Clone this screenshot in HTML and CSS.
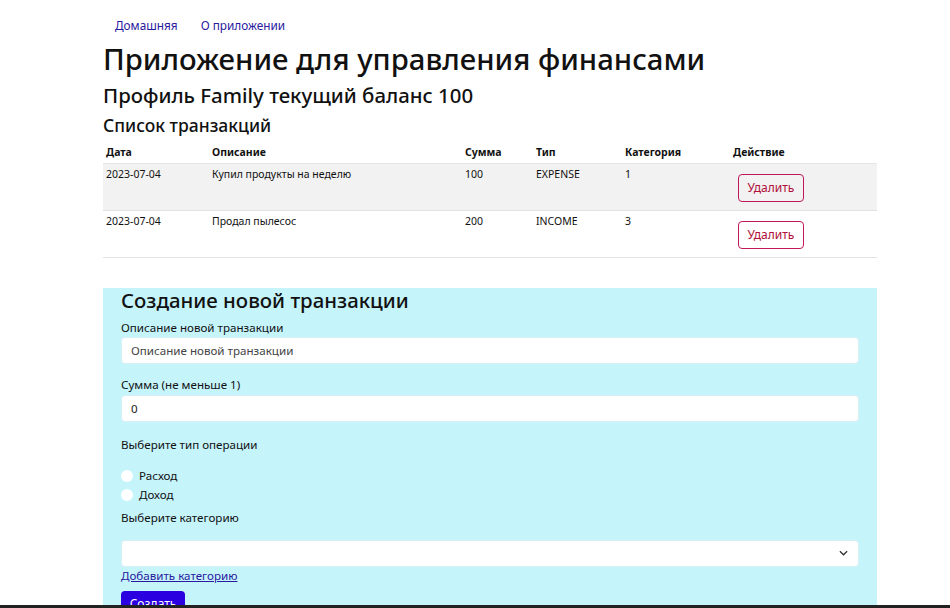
FILE: index.html
```html
<!DOCTYPE html>
<html lang="ru">
<head>
<meta charset="utf-8">
<title>Финансы</title>
<link rel="stylesheet" href="styles.css">
</head>
<body>
<div class="container">
  <nav class="nav">
    <a href="#">Домашняя</a>
    <a href="#">О приложении</a>
  </nav>
  <h1 class="title">Приложение для управления финансами</h1>
  <h2 class="profile">Профиль Family текущий баланс 100</h2>
  <h3 class="subtitle">Список транзакций</h3>
  <table class="tx">
    <thead>
      <tr>
        <th class="c-date">Дата</th>
        <th class="c-desc">Описание</th>
        <th class="c-sum">Сумма</th>
        <th class="c-type">Тип</th>
        <th class="c-cat">Категория</th>
        <th class="c-act">Действие</th>
      </tr>
    </thead>
    <tbody>
      <tr class="odd">
        <td>2023-07-04</td>
        <td>Купил продукты на неделю</td>
        <td>100</td>
        <td>EXPENSE</td>
        <td>1</td>
        <td><button class="del">Удалить</button></td>
      </tr>
      <tr>
        <td>2023-07-04</td>
        <td>Продал пылесос</td>
        <td>200</td>
        <td>INCOME</td>
        <td>3</td>
        <td><button class="del">Удалить</button></td>
      </tr>
    </tbody>
  </table>

  <section class="form-box">
    <h2 class="form-title">Создание новой транзакции</h2>
    <label class="lbl lbl-desc">Описание новой транзакции</label>
    <input class="field" type="text" placeholder="Описание новой транзакции">
    <label class="lbl lbl-sum">Сумма (не меньше 1)</label>
    <input class="field" type="text" value="0">
    <label class="lbl lbl-type">Выберите тип операции</label>
    <div class="radios">
      <label class="radio"><span class="dot"></span>Расход</label>
      <label class="radio"><span class="dot"></span>Доход</label>
    </div>
    <label class="lbl lbl-cat">Выберите категорию</label>
    <div class="select">
      <svg class="chev" width="9" height="6" viewBox="0 0 10 6"><path d="M1 1l4 4 4-4" fill="none" stroke="#333" stroke-width="1.4"/></svg>
    </div>
    <a class="add-link" href="#">Добавить категорию</a>
    <button class="create">Создать</button>
  </section>
</div>
<div class="bottom-bar"></div>
</body>
</html>
```

FILE: styles.css
```css
* { box-sizing: border-box; }
html, body { margin: 0; padding: 0; background: #fff; }
body {
  font-family: "Noto Sans", "Open Sans", sans-serif;
  color: #111;
  height: 608px;
  overflow: hidden;
}
.container {
  width: 774px;
  margin-left: 103px;
}
.nav {
  display: flex;
  gap: 23px;
  padding: 17px 0 0 12px;
  height: 38px;
}
.nav a {
  color: #2a1aa0;
  text-decoration: none;
  font-size: 11.8px;
  line-height: 17px;
}
.title {
  margin: 0;
  font-size: 29.3px;
  font-weight: 500;
  line-height: 42px;
  color: #111;
}
.profile {
  margin: 0;
  font-size: 20.4px;
  font-weight: 500;
  line-height: 30px;
}
.subtitle {
  margin: 0;
  font-size: 17.5px;
  font-weight: 500;
  line-height: 30px;
}
.tx {
  width: 100%;
  border-collapse: collapse;
  font-size: 10.5px;
}
.tx th {
  text-align: left;
  font-weight: 700;
  padding: 2px 3px 0;
  height: 23px;
  border-bottom: 1px solid #e6e6e6;
}
.tx td {
  vertical-align: top;
  padding: 3px 3px 0;
  height: 47px;
  border-bottom: 1px solid #e2e2e2;
}
.tx tr.odd td { background: #f2f2f2; }
.c-date { width: 106px; }
.c-desc { width: 253px; }
.c-sum { width: 71px; }
.c-type { width: 89px; }
.c-cat { width: 108px; }
.del {
  margin-top: 7px;
  margin-left: 5px;
  width: 66px;
  height: 28px;
  background: transparent;
  border: 1px solid #c2185b;
  border-radius: 4px;
  color: #b0103a;
  font-family: inherit;
  font-size: 12px;
}
.form-box {
  margin-top: 30px;
  background: #c5f4fb;
  padding: 0 18px 20px;
  height: 330px;
}
.form-title {
  margin: 0;
  font-size: 20.4px;
  font-weight: 500;
  line-height: 24px;
}
.lbl {
  display: block;
  font-size: 11.6px;
  line-height: 16px;
}
.lbl-desc { margin: 8px 0 1px; }
.lbl-sum { margin: 13px 0 2px; }
.lbl-type { margin: 15px 0 15px; }
.lbl-cat { margin: 7px 0 14px; }
.field {
  display: block;
  width: 100%;
  height: 27px;
  border: 1px solid #d8eef2;
  border-radius: 4px;
  background: #fff;
  font-family: inherit;
  font-size: 11.6px;
  padding: 0 9px;
  color: #222;
}
.field::placeholder { color: #444; }
.radios { display: flex; flex-direction: column; gap: 3px; }
.radio {
  display: flex;
  align-items: center;
  font-size: 11.6px;
  line-height: 16px;
}
.dot {
  width: 12px;
  height: 12px;
  border-radius: 50%;
  background: #fff;
  margin-right: 6px;
}
.select {
  height: 27px;
  background: #fff;
  border: 1px solid #d8eef2;
  border-radius: 4px;
  display: flex;
  align-items: center;
  justify-content: flex-end;
  padding-right: 10px;
}
.add-link {
  display: block;
  width: max-content;
  color: #2a1aa0;
  font-size: 11.6px;
  line-height: 16px;
  margin-top: 1px;
}
.create {
  display: block;
  margin-top: 7px;
  width: 64px;
  height: 26px;
  border: none;
  border-radius: 4px;
  background: #2b00e0;
  color: #fff;
  font-family: inherit;
  font-size: 12px;
}
.bottom-bar {
  position: fixed;
  left: 0;
  right: 0;
  bottom: 0;
  height: 3px;
  background: #222;
}
```
